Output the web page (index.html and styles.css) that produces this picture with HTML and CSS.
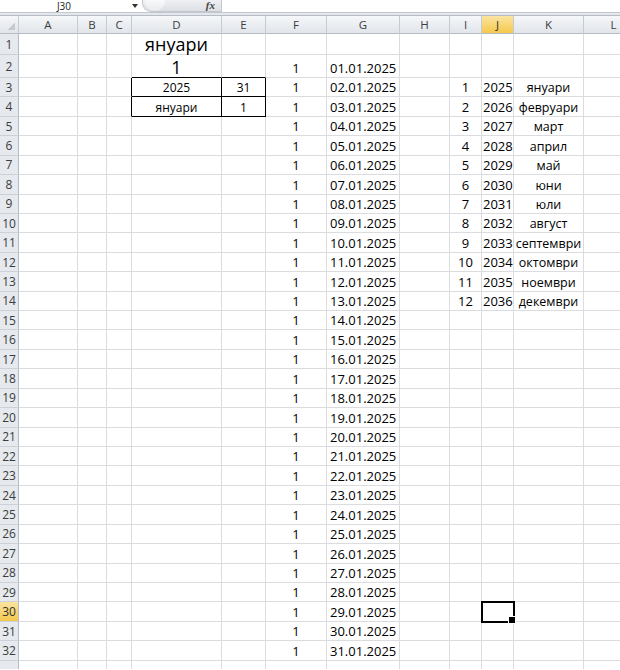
FILE: index.html
```html
<!DOCTYPE html>
<html lang="bg">
<head>
    <meta charset="UTF-8">
    <title>Календар - януари</title>
    <link rel="stylesheet" href="styles.css">
</head>
<body>
    <!-- Formula bar -->
    <div class="formula-bar">
        <div class="name-box">J30</div>
        <div class="name-arrow"><span></span></div>
        <div class="fx-box">
            <span class="fx-knob"></span>
            <span class="fx">fx</span>
        </div>
        <div class="formula-input"></div>
    </div>
    <div class="bar-gap"></div>

    <!-- Sheet -->
    <div class="grid-wrap">
        <table class="sheet">
            <colgroup>
                <col class="w-head">
                <col style="width:59px">
                <col style="width:29px">
                <col style="width:25px">
                <col style="width:90px">
                <col style="width:44px">
                <col style="width:61px">
                <col style="width:73px">
                <col style="width:50px">
                <col style="width:32px">
                <col style="width:32px">
                <col style="width:70px">
                <col style="width:60px">
            </colgroup>
            <tr class="hdr"><th class="corner"></th><th>A</th><th>B</th><th>C</th><th>D</th><th>E</th><th>F</th><th>G</th><th>H</th><th>I</th><th class="hl">J</th><th>K</th><th>L</th></tr>
            <tr class="r1"><th>1</th><td></td><td></td><td></td><td class="big">януари</td><td></td><td></td><td></td><td></td><td></td><td></td><td></td><td></td></tr>
            <tr class="r2"><th>2</th><td></td><td></td><td></td><td class="big bb-k">1</td><td class="bb-k"></td><td>1</td><td>01.01.2025</td><td></td><td></td><td></td><td></td><td></td></tr>
            <tr><th>3</th><td></td><td></td><td class="br-k"></td><td class="box">2025</td><td class="box">31</td><td>1</td><td>02.01.2025</td><td></td><td>1</td><td>2025</td><td>януари</td><td></td></tr>
            <tr><th>4</th><td></td><td></td><td class="br-k"></td><td class="box">януари</td><td class="box">1</td><td>1</td><td>03.01.2025</td><td></td><td>2</td><td>2026</td><td>февруари</td><td></td></tr>
            <tr><th>5</th><td></td><td></td><td></td><td></td><td></td><td>1</td><td>04.01.2025</td><td></td><td>3</td><td>2027</td><td>март</td><td></td></tr>
            <tr><th>6</th><td></td><td></td><td></td><td></td><td></td><td>1</td><td>05.01.2025</td><td></td><td>4</td><td>2028</td><td>април</td><td></td></tr>
            <tr><th>7</th><td></td><td></td><td></td><td></td><td></td><td>1</td><td>06.01.2025</td><td></td><td>5</td><td>2029</td><td>май</td><td></td></tr>
            <tr><th>8</th><td></td><td></td><td></td><td></td><td></td><td>1</td><td>07.01.2025</td><td></td><td>6</td><td>2030</td><td>юни</td><td></td></tr>
            <tr><th>9</th><td></td><td></td><td></td><td></td><td></td><td>1</td><td>08.01.2025</td><td></td><td>7</td><td>2031</td><td>юли</td><td></td></tr>
            <tr><th>10</th><td></td><td></td><td></td><td></td><td></td><td>1</td><td>09.01.2025</td><td></td><td>8</td><td>2032</td><td>август</td><td></td></tr>
            <tr><th>11</th><td></td><td></td><td></td><td></td><td></td><td>1</td><td>10.01.2025</td><td></td><td>9</td><td>2033</td><td>септември</td><td></td></tr>
            <tr><th>12</th><td></td><td></td><td></td><td></td><td></td><td>1</td><td>11.01.2025</td><td></td><td>10</td><td>2034</td><td>октомври</td><td></td></tr>
            <tr><th>13</th><td></td><td></td><td></td><td></td><td></td><td>1</td><td>12.01.2025</td><td></td><td>11</td><td>2035</td><td>ноември</td><td></td></tr>
            <tr><th>14</th><td></td><td></td><td></td><td></td><td></td><td>1</td><td>13.01.2025</td><td></td><td>12</td><td>2036</td><td>декември</td><td></td></tr>
            <tr><th>15</th><td></td><td></td><td></td><td></td><td></td><td>1</td><td>14.01.2025</td><td></td><td></td><td></td><td></td><td></td></tr>
            <tr><th>16</th><td></td><td></td><td></td><td></td><td></td><td>1</td><td>15.01.2025</td><td></td><td></td><td></td><td></td><td></td></tr>
            <tr><th>17</th><td></td><td></td><td></td><td></td><td></td><td>1</td><td>16.01.2025</td><td></td><td></td><td></td><td></td><td></td></tr>
            <tr><th>18</th><td></td><td></td><td></td><td></td><td></td><td>1</td><td>17.01.2025</td><td></td><td></td><td></td><td></td><td></td></tr>
            <tr><th>19</th><td></td><td></td><td></td><td></td><td></td><td>1</td><td>18.01.2025</td><td></td><td></td><td></td><td></td><td></td></tr>
            <tr><th>20</th><td></td><td></td><td></td><td></td><td></td><td>1</td><td>19.01.2025</td><td></td><td></td><td></td><td></td><td></td></tr>
            <tr><th>21</th><td></td><td></td><td></td><td></td><td></td><td>1</td><td>20.01.2025</td><td></td><td></td><td></td><td></td><td></td></tr>
            <tr><th>22</th><td></td><td></td><td></td><td></td><td></td><td>1</td><td>21.01.2025</td><td></td><td></td><td></td><td></td><td></td></tr>
            <tr><th>23</th><td></td><td></td><td></td><td></td><td></td><td>1</td><td>22.01.2025</td><td></td><td></td><td></td><td></td><td></td></tr>
            <tr><th>24</th><td></td><td></td><td></td><td></td><td></td><td>1</td><td>23.01.2025</td><td></td><td></td><td></td><td></td><td></td></tr>
            <tr><th>25</th><td></td><td></td><td></td><td></td><td></td><td>1</td><td>24.01.2025</td><td></td><td></td><td></td><td></td><td></td></tr>
            <tr><th>26</th><td></td><td></td><td></td><td></td><td></td><td>1</td><td>25.01.2025</td><td></td><td></td><td></td><td></td><td></td></tr>
            <tr><th>27</th><td></td><td></td><td></td><td></td><td></td><td>1</td><td>26.01.2025</td><td></td><td></td><td></td><td></td><td></td></tr>
            <tr><th>28</th><td></td><td></td><td></td><td></td><td></td><td>1</td><td>27.01.2025</td><td></td><td></td><td></td><td></td><td></td></tr>
            <tr><th>29</th><td></td><td></td><td></td><td></td><td></td><td>1</td><td>28.01.2025</td><td></td><td></td><td></td><td></td><td></td></tr>
            <tr><th class="hl">30</th><td></td><td></td><td></td><td></td><td></td><td>1</td><td>29.01.2025</td><td></td><td></td><td class="sel"></td><td></td><td></td></tr>
            <tr><th>31</th><td></td><td></td><td></td><td></td><td></td><td>1</td><td>30.01.2025</td><td></td><td></td><td></td><td></td><td></td></tr>
            <tr><th>32</th><td></td><td></td><td></td><td></td><td></td><td>1</td><td>31.01.2025</td><td></td><td></td><td></td><td></td><td></td></tr>
            <tr><th></th><td></td><td></td><td></td><td></td><td></td><td></td><td></td><td></td><td></td><td></td><td></td><td></td></tr>
        </table>
    </div>
</body>
</html>
```

FILE: styles.css
```css
* {
    margin: 0;
    padding: 0;
    box-sizing: border-box;
}

body {
    width: 620px;
    height: 670px;
    overflow: hidden;
    background: #fff;
    font-family: "Open Sans", "Liberation Sans", sans-serif;
    color: #000;
}

/* Formula bar */
.formula-bar {
    display: flex;
    height: 13px;
    background: #fff;
    border-bottom: 1px solid #c3c8cf;
}

.name-box {
    width: 128px;
    font-size: 10px;
    line-height: 12px;
    text-align: center;
    color: #222;
}

.name-arrow {
    width: 14px;
    display: flex;
    justify-content: center;
    align-items: center;
}

.name-arrow span {
    width: 0;
    height: 0;
    border-left: 3px solid transparent;
    border-right: 3px solid transparent;
    border-top: 4px solid #333;
}

.fx-box {
    width: 80px;
    display: flex;
    align-items: center;
    justify-content: space-between;
    background: linear-gradient(#eef0f3, #dcdfe4);
    border: 1px solid #c3c8cf;
    border-top: none;
    border-radius: 0 0 0 9px;
    padding: 0 6px 0 2px;
}

.fx-knob {
    width: 20px;
    height: 11px;
    border-radius: 0 0 10px 10px;
    background: linear-gradient(#f8f9fa, #e9ebee);
}

.fx {
    font-family: "Liberation Serif", serif;
    font-style: italic;
    font-weight: bold;
    font-size: 11px;
    line-height: 11px;
    color: #444;
}

.formula-input {
    flex: 1;
    background: #fff;
}

.bar-gap {
    height: 3px;
    background: #e4e7eb;
    border-bottom: 1px solid #b5bcc5;
}

/* Sheet grid */
.grid-wrap {
    height: 653px;
    overflow: hidden;
}

.sheet {
    border-collapse: separate;
    border-spacing: 0;
    table-layout: fixed;
    width: 644px;
}

.w-head { width: 19px; }

.sheet tr { height: 19.43px; }
.sheet tr.hdr { height: 18px; }
.sheet tr.r1 { height: 20px; }
.sheet tr.r2 { height: 23px; }

.sheet th {
    font-weight: normal;
    font-size: 11.5px;
    color: #3c3c3c;
    text-align: center;
    padding: 0;
}

.hdr th {
    background: linear-gradient(#f5f7f9, #e1e5ea);
    border-right: 1px solid #c6cbd2;
    border-bottom: 1px solid #b5bcc5;
}

.sheet tr:not(.hdr) th {
    background: #e6e9ed;
    border-right: 1px solid #b5bcc5;
    border-bottom: 1px solid #cdd1d7;
    font-size: 12px;
}

.sheet th.corner {
    background: linear-gradient(135deg, transparent 55%, #c6cbd2 55%) right 3px bottom 3px / 8px 8px no-repeat,
                linear-gradient(#f5f7f9, #e1e5ea);
}

.sheet th.hl,
.sheet tr:not(.hdr) th.hl {
    background: linear-gradient(#fbe4a0, #f4c84c);
    color: #333;
}

.sheet td {
    border-right: 1px solid #dadcdf;
    border-bottom: 1px solid #dadcdf;
    font-size: 13px;
    line-height: 17px;
    text-align: center;
    vertical-align: bottom;
    white-space: nowrap;
    padding: 0 1px;
}

/* dates column G */
.sheet td:nth-child(8) {
    text-align: left;
    padding-left: 3px;
}

/* month names column K */
.sheet td:nth-child(12) {
    font-size: 12.5px;
    padding: 0;
}

.sheet td.big {
    font-size: 18px;
    line-height: 20px;
}

.sheet td.box {
    font-size: 12px;
    border-right-color: #000;
    border-bottom-color: #000;
}

.sheet td.br-k { border-right-color: #000; }
.sheet td.bb-k { border-bottom-color: #000; }

.sheet td.sel {
    position: relative;
    outline: 2px solid #000;
    outline-offset: -1px;
}

.sheet td.sel::after {
    content: "";
    position: absolute;
    right: -3px;
    bottom: -3px;
    width: 6px;
    height: 6px;
    background: #000;
    border: 1px solid #fff;
}
```
